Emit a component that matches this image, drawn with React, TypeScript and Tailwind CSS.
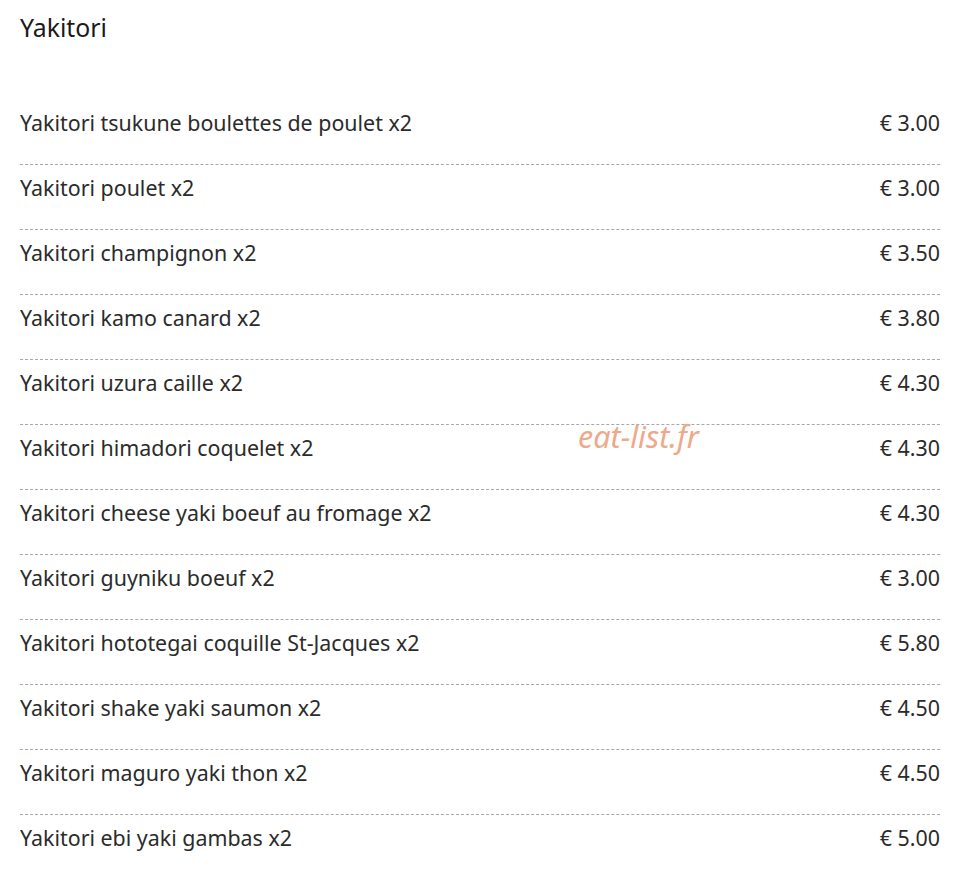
import React from "react";

const items: [string, string][] = [
  ["Yakitori tsukune boulettes de poulet x2", "€ 3.00"],
  ["Yakitori poulet x2", "€ 3.00"],
  ["Yakitori champignon x2", "€ 3.50"],
  ["Yakitori kamo canard x2", "€ 3.80"],
  ["Yakitori uzura caille x2", "€ 4.30"],
  ["Yakitori himadori coquelet x2", "€ 4.30"],
  ["Yakitori cheese yaki boeuf au fromage x2", "€ 4.30"],
  ["Yakitori guyniku boeuf x2", "€ 3.00"],
  ["Yakitori hototegai coquille St-Jacques x2", "€ 5.80"],
  ["Yakitori shake yaki saumon x2", "€ 4.50"],
  ["Yakitori maguro yaki thon x2", "€ 4.50"],
  ["Yakitori ebi yaki gambas x2", "€ 5.00"],
];

export default function App() {
  return (
    <div
      className="relative w-[957px] h-[874px] bg-white overflow-hidden text-[#2b2b2b]"
      style={{ fontFamily: '"Noto Sans", "Open Sans", sans-serif' }}
    >
      <div className="px-5 pt-[12px]">
        <h1 className="text-[24.8px] leading-[30px] text-[#1a1a1a]">Yakitori</h1>
        <div className="mt-[58px] w-[920px]">
          {items.map(([name, price], i) => (
            <div
              key={i}
              className={
                "flex justify-between items-center pt-[9px] pb-[27px] text-[21.4px] leading-[28px] " +
                (i < items.length - 1 ? "border-b border-dashed border-[#a8a8a8]" : "")
              }
            >
              <span>{name}</span>
              <span>{price}</span>
            </div>
          ))}
        </div>
      </div>
      <div className="absolute left-[578px] top-[417px] text-[30.5px] italic text-[#eda98a] leading-[38px]">
        eat-list.fr
      </div>
    </div>
  );
}
